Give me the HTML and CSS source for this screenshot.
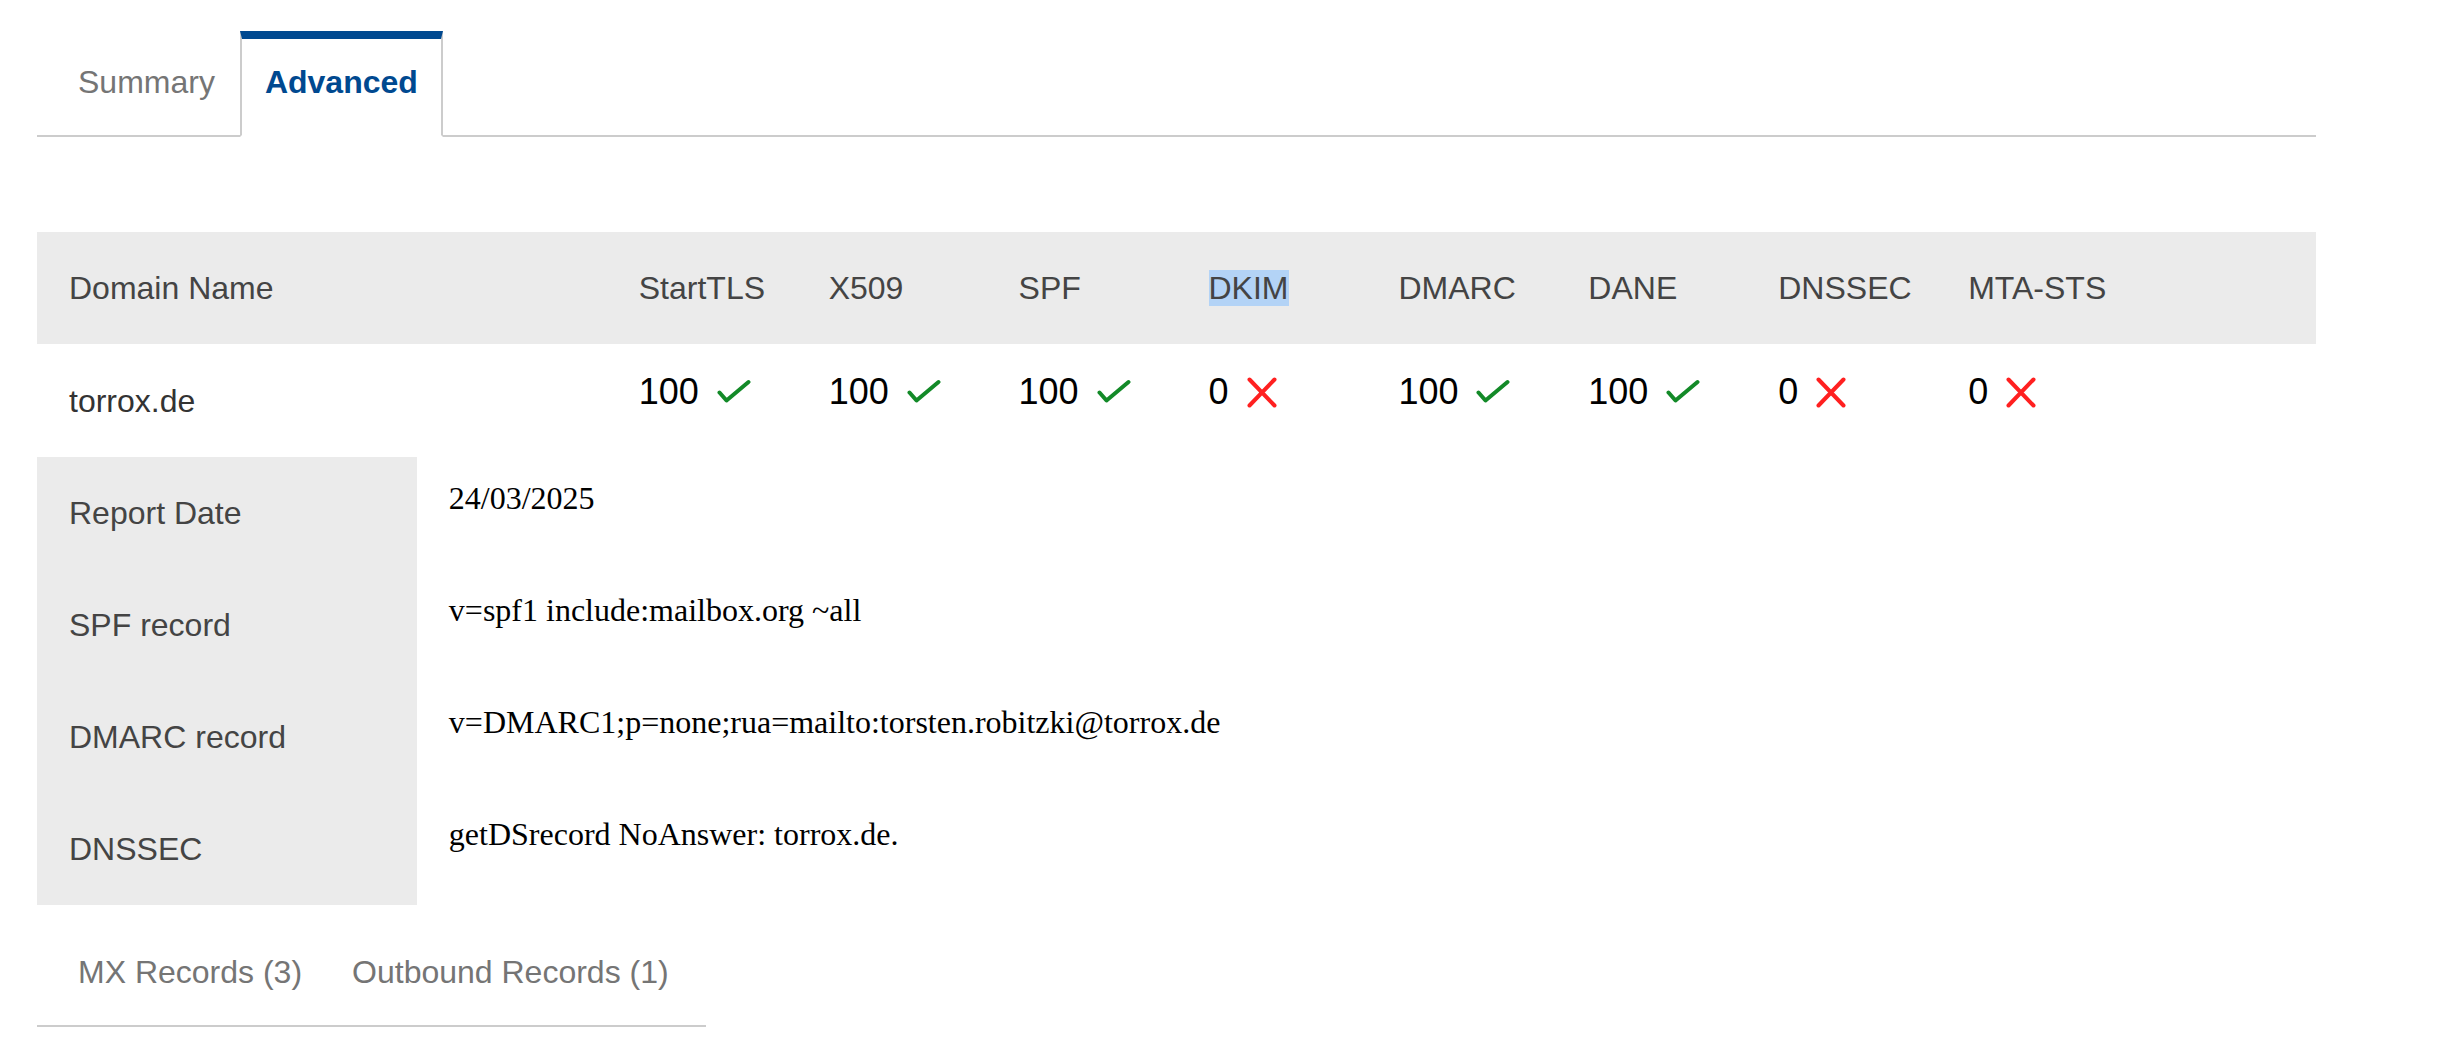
FILE: index.html
```html
<!DOCTYPE html>
<html lang="en">
<head>
    <meta charset="UTF-8">
    <meta name="viewport" content="width=device-width, initial-scale=1.0">
    <title>torrox.de | Mail security report</title>
    <link rel="stylesheet" href="styles.css">
</head>
<body>
    <main class="report">
        <ul class="tabs">
            <li class="tab">Summary</li>
            <li class="tab active">Advanced</li>
        </ul>

        <div class="scores">
            <div class="scores-head">
                <div class="cell">Domain Name</div>
                <div class="cell">StartTLS</div>
                <div class="cell">X509</div>
                <div class="cell">SPF</div>
                <div class="cell"><span class="selected">DKIM</span></div>
                <div class="cell">DMARC</div>
                <div class="cell">DANE</div>
                <div class="cell">DNSSEC</div>
                <div class="cell">MTA-STS</div>
            </div>
            <div class="scores-row">
                <div class="cell domain">torrox.de</div>
                <div class="cell score"><span>100</span>
                    <svg class="icon ok" width="34" height="26" viewBox="0 0 34 26"><path d="M2.5 13.5 L9.5 21.5 L31.5 3"/></svg>
                </div>
                <div class="cell score"><span>100</span>
                    <svg class="icon ok" width="34" height="26" viewBox="0 0 34 26"><path d="M2.5 13.5 L9.5 21.5 L31.5 3"/></svg>
                </div>
                <div class="cell score"><span>100</span>
                    <svg class="icon ok" width="34" height="26" viewBox="0 0 34 26"><path d="M2.5 13.5 L9.5 21.5 L31.5 3"/></svg>
                </div>
                <div class="cell score"><span>0</span>
                    <svg class="icon fail" width="30" height="31" viewBox="0 0 30 31"><path d="M2.5 2.5 L27.5 28.5 M27.5 2.5 L2.5 28.5"/></svg>
                </div>
                <div class="cell score"><span>100</span>
                    <svg class="icon ok" width="34" height="26" viewBox="0 0 34 26"><path d="M2.5 13.5 L9.5 21.5 L31.5 3"/></svg>
                </div>
                <div class="cell score"><span>100</span>
                    <svg class="icon ok" width="34" height="26" viewBox="0 0 34 26"><path d="M2.5 13.5 L9.5 21.5 L31.5 3"/></svg>
                </div>
                <div class="cell score"><span>0</span>
                    <svg class="icon fail" width="30" height="31" viewBox="0 0 30 31"><path d="M2.5 2.5 L27.5 28.5 M27.5 2.5 L2.5 28.5"/></svg>
                </div>
                <div class="cell score"><span>0</span>
                    <svg class="icon fail" width="30" height="31" viewBox="0 0 30 31"><path d="M2.5 2.5 L27.5 28.5 M27.5 2.5 L2.5 28.5"/></svg>
                </div>
            </div>
        </div>

        <dl class="details">
            <dt>Report Date</dt>
            <dd>24/03/2025</dd>
            <dt>SPF record</dt>
            <dd>v=spf1 include:mailbox.org ~all</dd>
            <dt>DMARC record</dt>
            <dd>v=DMARC1;p=none;rua=mailto:torsten.robitzki@torrox.de</dd>
            <dt>DNSSEC</dt>
            <dd>getDSrecord NoAnswer: torrox.de.</dd>
        </dl>

        <ul class="tabs sub-tabs">
            <li class="tab">MX Records (3)</li>
            <li class="tab">Outbound Records (1)</li>
        </ul>
    </main>
</body>
</html>
```

FILE: styles.css
```css
* {
    box-sizing: border-box;
}

body {
    margin: 0;
    font-family: "Liberation Sans", Arial, sans-serif;
    background-color: #fff;
    color: #444;
}

.report {
    width: 2279px;
    margin-left: 37px;
    padding-top: 31px;
}

/* tab bar, used on top and under the details */
.tabs {
    display: flex;
    list-style: none;
    margin: 0;
    padding: 0 0 0 16px;
    border-bottom: 2px solid #ccc;
}

.tab {
    margin-bottom: -2px;
    padding: 25px 23px 35px;
    border: 2px solid transparent;
    border-top-width: 8px;
    font-size: 32px;
    line-height: 36px;
    color: #757575;
    cursor: pointer;
}

.tab.active {
    border-color: #ccc;
    border-top-color: #004990;
    border-bottom-color: #fff;
    background-color: #fff;
    color: #004990;
    font-weight: bold;
}

.sub-tabs {
    display: inline-flex;
    margin-top: 16px;
    padding-right: 12px;
}

/* score table */
.scores {
    margin-top: 95px;
}

.scores-head,
.scores-row {
    display: grid;
    grid-template-columns: minmax(0, 3fr) repeat(9, minmax(0, 1fr));
}

.scores-head {
    height: 112px;
    background-color: #ebebeb;
    align-items: center;
}

.scores-row {
    height: 113px;
}

.cell {
    padding-left: 32px;
    font-size: 32px;
    line-height: 36px;
    white-space: nowrap;
}

.selected {
    background-color: #b3d3f6;
}

.domain {
    align-self: center;
    color: #333;
}

.score {
    display: flex;
    align-self: start;
    align-items: center;
    gap: 18px;
    padding-top: 30px;
    font-size: 36px;
    color: #000;
}

.icon {
    flex: none;
    fill: none;
    stroke-width: 4;
    stroke-linecap: round;
    stroke-linejoin: round;
}

.icon.ok {
    stroke: #138a28;
}

.icon.fail {
    stroke: #ff2020;
}

/* details under the scores */
.details {
    display: grid;
    grid-template-columns: minmax(0, 2fr) minmax(0, 10fr);
    grid-auto-rows: 112px;
    margin: 0;
}

.details dt {
    display: flex;
    align-items: center;
    padding-left: 32px;
    background-color: #ebebeb;
    font-size: 32px;
    line-height: 36px;
}

.details dd {
    margin: 0;
    padding: 23px 0 0 32px;
    font-family: "Liberation Serif", "Times New Roman", serif;
    font-size: 32px;
    line-height: 36px;
    color: #000;
}
```
